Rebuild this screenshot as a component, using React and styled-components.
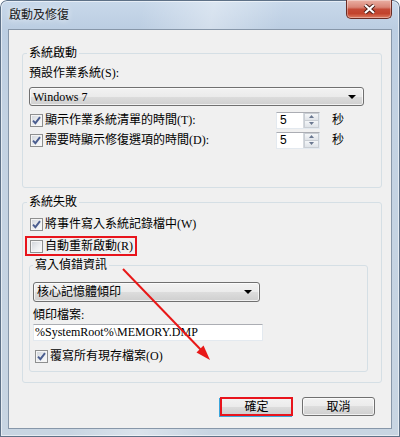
import React from "react";
import styled, { createGlobalStyle } from "styled-components";

const GlobalStyle = createGlobalStyle`
  html, body { margin: 0; padding: 0; background: #ffffff; }
  body {
    font-family: "Liberation Serif", "Noto Sans CJK TC", serif;
    font-size: 12px;
    color: #000;
  }
  * { box-sizing: border-box; }
`;

const Window = styled.div`
  position: relative;
  width: 400px;
  height: 437px;
  display: flex;
  flex-direction: column;
  padding: 0 8px 8px 8px;
  border-radius: 7px 7px 0 0;
  background:
    linear-gradient(100deg, rgba(255,255,255,0) 30%, rgba(255,255,255,0.35) 45%, rgba(255,255,255,0) 60%),
    linear-gradient(to bottom, #c9d9eb 0px, #bccee2 28px, #c3d2e2 120px, #c8d5e2 100%);
  box-shadow: inset 0 0 0 1px #5e7187, inset 0 0 0 2px rgba(255,255,255,0.55);
`;

const TitleBar = styled.div`
  height: 29px;
  display: flex;
  justify-content: space-between;
  align-items: flex-start;
  padding-left: 1px;
`;

const TitleText = styled.div`
  margin-top: 7px;
  height: 16px;
  line-height: 16px;
  font-size: 12px;
  color: #1b1b1b;
  text-shadow: 0 0 6px rgba(255,255,255,0.9);
`;

const CloseButton = styled.div`
  width: 46px;
  height: 19px;
  display: flex;
  align-items: center;
  justify-content: center;
  border: 1px solid #6a2c24;
  border-top: none;
  border-radius: 0 0 5px 5px;
  background: linear-gradient(
    to bottom,
    #eab0a3 0%,
    #d98576 40%,
    #c44a36 52%,
    #c2432c 75%,
    #dd7d62 100%
  );
  box-shadow: inset 0 0 0 1px rgba(255,255,255,0.35);
`;

const Client = styled.div`
  height: 400px;
  display: flex;
  flex-direction: column;
  border: 1px solid #8797a9;
  background: #f0f0f0;
  padding: 15px 9px 0 13px;
`;

const Group = styled.fieldset`
  margin: ${(p) => p.$margin || "0"};
  padding: ${(p) => p.$pad};
  width: ${(p) => p.$width}px;
  min-width: 0;
  border: 1px solid #d5dfe5;
  border-radius: 3px;
`;

const Legend = styled.legend`
  margin-left: ${(p) => (p.$shift ? p.$shift : 0)}px;
  padding: 0 2px;
  height: 16px;
  line-height: 16px;
  font-size: 12px;
`;

const Label = styled.div`
  height: 16px;
  line-height: 16px;
  margin-top: ${(p) => p.$top || 0}px;
  white-space: nowrap;
`;

const Combo = styled.div`
  display: flex;
  align-items: center;
  justify-content: space-between;
  width: ${(p) => p.$width}px;
  height: ${(p) => p.$height}px;
  margin-top: ${(p) => p.$top}px;
  padding: 0 7px 0 3px;
  border: 1px solid #707070;
  border-radius: 3px;
  background: linear-gradient(to bottom, #f2f2f2 0%, #ebebeb 50%, #dddddd 50%, #cfcfcf 100%);
  box-shadow: inset 0 0 0 1px rgba(255,255,255,0.7);
  line-height: 16px;
  white-space: nowrap;
`;

const ComboArrow = styled.span`
  width: 0;
  height: 0;
  border-left: 4px solid transparent;
  border-right: 4px solid transparent;
  border-top: 4px solid #000;
`;

const CheckRow = styled.div`
  display: flex;
  align-items: center;
  gap: 2px;
  height: 18px;
  margin-top: ${(p) => p.$top || 0}px;
  padding-left: ${(p) => p.$indent || 0}px;
  white-space: nowrap;
`;

const RowText = styled.span`
  flex: ${(p) => (p.$grow ? 1 : "none")};
  line-height: 16px;
`;

const BoxOuter = styled.span`
  width: 13px;
  height: 13px;
  flex: none;
  display: flex;
  align-items: center;
  justify-content: center;
  border: 1px solid #8e8f8f;
  background: linear-gradient(135deg, #cfd3d9 0%, #eef0f2 60%, #fbfbfb 100%);
  box-shadow: inset 0 0 0 1px #f5f5f5;
`;

const RedFrame = styled.div`
  display: flex;
  align-items: center;
  gap: 2px;
  width: 112px;
  height: 20px;
  margin: 3px 0 0 -4px;
  padding-left: 3px;
  border: 2px solid #e8141c;
  white-space: nowrap;
`;

const SpinBox = styled.div`
  display: flex;
  width: 44px;
  height: 17px;
  border: 1px solid #e3e9ef;
  border-top-color: #abadb3;
  background: #fff;
`;

const SpinValue = styled.span`
  flex: 1;
  padding-left: 3px;
  line-height: 15px;
  font-family: "Liberation Sans", "Noto Sans CJK TC", sans-serif;
`;

const SpinButtons = styled.div`
  width: 16px;
  display: flex;
  flex-direction: column;
  border-left: 1px solid #d5d9de;
`;

const SpinHalf = styled.div`
  flex: 1;
  display: flex;
  align-items: center;
  justify-content: center;
  background: linear-gradient(to bottom, #f4f6f8, #dfe3e8);
  border: 1px solid #c9ced4;
  & + & { border-top: none; }
`;

const Unit = styled.span`
  margin: 0 31px 0 10px;
  line-height: 16px;
`;

const TextBox = styled.div`
  width: 230px;
  height: 17px;
  margin-top: 1px;
  padding-left: 1px;
  border: 1px solid #e3e9ef;
  border-top-color: #abadb3;
  background: #fff;
  line-height: 15px;
  white-space: nowrap;
`;

const ButtonRow = styled.div`
  display: flex;
  justify-content: flex-end;
  gap: 9px;
  margin-top: 14px;
  padding-right: 7px;
`;

const Button = styled.div`
  width: 73px;
  height: 19px;
  display: flex;
  align-items: center;
  justify-content: center;
  border: ${(p) => (p.$marked ? "2px solid #e8141c" : "1px solid #707070")};
  border-radius: ${(p) => (p.$marked ? "0" : "3px")};
  background: linear-gradient(to bottom, #f2f2f2 0%, #ebebeb 50%, #dddddd 50%, #cfcfcf 100%);
  box-shadow: ${(p) =>
    p.$marked
      ? "-1px 1px 0 #3ca6dc"
      : "inset 0 0 0 1px rgba(255,255,255,0.7)"};
  font-size: 12px;
  line-height: 16px;
`;

const Overlay = styled.svg`
  position: absolute;
  left: 0;
  top: 0;
  pointer-events: none;
`;

function CheckBox({ checked }) {
  return (
    <BoxOuter>
      {checked && (
        <svg width="9" height="9" viewBox="0 0 9 9">
          <path d="M1 4.6 L3.4 7.2 L8 1.2" fill="none" stroke="#4a5d8f" strokeWidth="1.9" />
        </svg>
      )}
    </BoxOuter>
  );
}

function Spinner({ value }) {
  return (
    <SpinBox>
      <SpinValue>{value}</SpinValue>
      <SpinButtons>
        <SpinHalf>
          <svg width="5" height="3" viewBox="0 0 5 3">
            <path d="M0 3 L2.5 0 L5 3 Z" fill="#6a7890" />
          </svg>
        </SpinHalf>
        <SpinHalf>
          <svg width="5" height="3" viewBox="0 0 5 3">
            <path d="M0 0 L2.5 3 L5 0 Z" fill="#6a7890" />
          </svg>
        </SpinHalf>
      </SpinButtons>
    </SpinBox>
  );
}

export default function App() {
  return (
    <>
      <GlobalStyle />
      <Window>
        <TitleBar>
          <TitleText>啟動及修復</TitleText>
          <CloseButton>
            <svg width="13" height="10" viewBox="0 0 13 10">
              <path d="M2 1 L11 9 M11 1 L2 9" stroke="#4a1d16" strokeWidth="4" />
              <path d="M2 1 L11 9 M11 1 L2 9" stroke="#ffffff" strokeWidth="2.2" />
            </svg>
          </CloseButton>
        </TitleBar>

        <Client>
          <Group $width={360} $pad="4px 6px 38px 6px">
            <Legend $shift={-2}>系統啟動</Legend>
            <Label>預設作業系統(S):</Label>
            <Combo $width={335} $height={19} $top={6}>
              <span>Windows 7</span>
              <ComboArrow />
            </Combo>
            <CheckRow $top={5} $indent={1}>
              <CheckBox checked />
              <RowText $grow>顯示作業系統清單的時間(T):</RowText>
              <Spinner value="5" />
              <Unit>秒</Unit>
            </CheckRow>
            <CheckRow $top={2} $indent={1}>
              <CheckBox checked />
              <RowText $grow>需要時顯示修復選項的時間(D):</RowText>
              <Spinner value="5" />
              <Unit>秒</Unit>
            </CheckRow>
          </Group>

          <Group $width={360} $margin="6px 0 0 0" $pad="5px 6px 10px 6px">
            <Legend $shift={-2}>系統失敗</Legend>
            <CheckRow $indent={1}>
              <CheckBox checked />
              <RowText>將事件寫入系統記錄檔中(W)</RowText>
            </CheckRow>
            <RedFrame>
              <CheckBox />
              <RowText>自動重新啟動(R)</RowText>
            </RedFrame>
            <Group $width={339} $margin="1px 0 0 0" $pad="9px 3px 6px 3px">
              <Legend>寫入偵錯資訊</Legend>
              <Combo $width={227} $height={20} $top={0}>
                <span>核心記憶體傾印</span>
                <ComboArrow />
              </Combo>
              <Label $top={5}>傾印檔案:</Label>
              <TextBox>{"%SystemRoot%\\MEMORY.DMP"}</TextBox>
              <CheckRow $top={6} $indent={2}>
                <CheckBox checked />
                <RowText>覆寫所有現存檔案(O)</RowText>
              </CheckRow>
            </Group>
          </Group>

          <ButtonRow>
            <Button $marked>確定</Button>
            <Button>取消</Button>
          </ButtonRow>
        </Client>

        <Overlay width="400" height="437" viewBox="0 0 400 437">
          <line x1="123" y1="269" x2="203" y2="352" stroke="#e81818" strokeWidth="2" />
          <polygon points="210,360 196.5,352.5 203.5,345.5" fill="#e81818" />
        </Overlay>
      </Window>
    </>
  );
}
